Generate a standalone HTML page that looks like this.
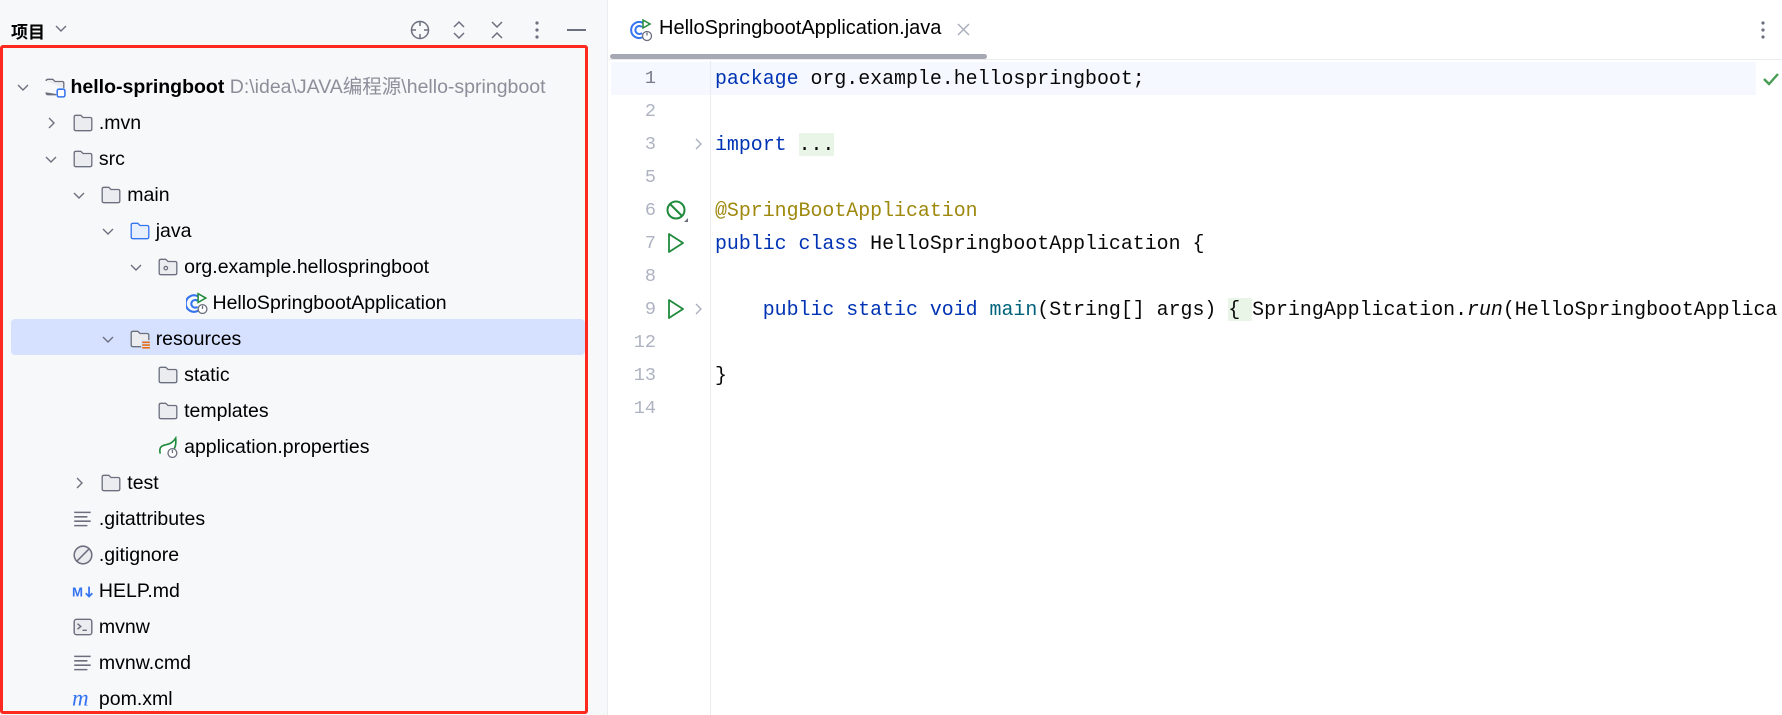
<!DOCTYPE html>
<html><head><meta charset="utf-8"><style>
*{margin:0;padding:0;box-sizing:border-box}
html,body{width:1782px;height:715px;overflow:hidden}
body{background:#fff;font-family:"Liberation Sans","Noto Sans CJK SC",sans-serif;position:relative;color:#000}
#left{position:absolute;left:0;top:0;width:608px;height:715px;background:#f7f8fa;border-right:1px solid #ebecf0;overflow:hidden}
.a{position:absolute}
.row{position:absolute;height:36px;line-height:36px;font-size:19.5px;white-space:nowrap}
.chev{position:absolute;width:14px;height:14px}
.ic{position:absolute;width:22px;height:22px}
#clip{position:absolute;left:0;top:0;width:1782px;height:715px;overflow:hidden}
.code{position:absolute;left:715px;font-family:"Liberation Mono",monospace;font-size:19.9px;line-height:33px;white-space:pre;color:#080808}
.ln{position:absolute;width:60px;left:596px;text-align:right;font-family:"Liberation Mono",monospace;font-size:18.5px;line-height:33px;color:#aeb3c2}
.kw{color:#0033b3}
</style></head><body>
<div id="left">
 <div class="a" style="left:11px;top:18px;font-size:17px;font-weight:bold;color:#000">项目</div>
 <svg class="a" style="left:55px;top:24px" width="12" height="10"><path d="M1 2 L6 7 L11 2" stroke="#6c707e" stroke-width="1.4" fill="none"/></svg>
 <svg class="a" style="left:409px;top:19px" width="22" height="22"><circle cx="11" cy="11" r="8.5" stroke="#6c707e" stroke-width="1.5" fill="none"/><path d="M11 2v5M11 15v5M2 11h5M15 11h5" stroke="#6c707e" stroke-width="1.5"/></svg>
 <svg class="a" style="left:451px;top:19px" width="16" height="22"><path d="M3 8 L8 3 L13 8 M3 14 L8 19 L13 14" stroke="#6c707e" stroke-width="1.5" fill="none"/></svg>
 <svg class="a" style="left:489px;top:19px" width="16" height="22"><path d="M3 3 L8 8 L13 3 M3 19 L8 14 L13 19" stroke="#6c707e" stroke-width="1.5" fill="none"/></svg>
 <svg class="a" style="left:533px;top:19px" width="8" height="22"><circle cx="4" cy="4" r="1.6" fill="#6c707e"/><circle cx="4" cy="11" r="1.6" fill="#6c707e"/><circle cx="4" cy="18" r="1.6" fill="#6c707e"/></svg>
 <div class="a" style="left:567px;top:29px;width:19px;height:1.6px;background:#6c707e"></div>

 <div class="a" style="left:11px;top:319px;width:574px;height:36px;background:#d5e1ff;border-radius:4px"></div>
 <div id="tree"></div>
 <div class="a" style="left:0;top:45px;width:588px;height:669px;border:3px solid #ff2a1f;border-radius:3px"></div>
</div>

<div id="clip">
<div class="a" style="left:609px;top:0;width:1173px;height:60px;border-bottom:1px solid #ebecf0;background:#fff"></div>
<svg class="a" style="left:629px;top:18px" width="24" height="24"><path d="M14 5 A8 8 0 1 0 14 19" stroke="#3574f0" stroke-width="2" fill="none"/><path d="M13 9 A4 4 0 1 0 13 15" stroke="#3574f0" stroke-width="2" fill="none"/><path d="M14 2 L21 6 L14 10 Z" stroke="#208a3c" stroke-width="1.5" fill="#fff"/><circle cx="18" cy="18" r="4.5" fill="#fff" stroke="#6c707e" stroke-width="1.3"/><path d="M18 14.5v3" stroke="#6c707e" stroke-width="1.3"/></svg>
<div class="a" style="left:659px;top:17px;font-size:20px;color:#000">HelloSpringbootApplication.java</div>
<svg class="a" style="left:957px;top:23px" width="13" height="13"><path d="M1 1L12 12M12 1L1 12" stroke="#a8adbd" stroke-width="1.4"/></svg>
<svg class="a" style="left:1759px;top:19px" width="8" height="22"><circle cx="4" cy="4" r="1.6" fill="#6c707e"/><circle cx="4" cy="11" r="1.6" fill="#6c707e"/><circle cx="4" cy="18" r="1.6" fill="#6c707e"/></svg>
<div class="a" style="left:610px;top:54px;width:377px;height:5px;background:#a6a9b3;border-radius:3px"></div>

<div class="a" style="left:611px;top:62px;width:1145px;height:33px;background:#f5f8fe"></div>
<div class="a" style="left:710px;top:61px;width:1px;height:654px;background:#ebecf0"></div>
<svg class="a" style="left:1762px;top:71px" width="18" height="16"><path d="M2 8 L7 13 L16 3" stroke="#499c54" stroke-width="2.4" fill="none"/></svg>

<div class="ln" style="top:62px;color:#767a8a">1</div>
<div class="ln" style="top:95px">2</div>
<div class="ln" style="top:128px">3</div>
<div class="ln" style="top:161px">5</div>
<div class="ln" style="top:194px">6</div>
<div class="ln" style="top:227px">7</div>
<div class="ln" style="top:260px">8</div>
<div class="ln" style="top:293px">9</div>
<div class="ln" style="top:326px">12</div>
<div class="ln" style="top:359px">13</div>
<div class="ln" style="top:392px">14</div>

<svg class="a" style="left:694px;top:137px" width="10" height="14"><path d="M2 2 L7 7 L2 12" stroke="#a8adbd" stroke-width="1.3" fill="none"/></svg>
<svg class="a" style="left:694px;top:302px" width="10" height="14"><path d="M2 2 L7 7 L2 12" stroke="#a8adbd" stroke-width="1.3" fill="none"/></svg>
<svg class="a" style="left:665px;top:199px" width="24" height="24"><circle cx="11" cy="11" r="8.5" stroke="#208a3c" stroke-width="2" fill="none"/><path d="M5 5 L17 17" stroke="#208a3c" stroke-width="2"/><path d="M19 23 L23 19 L23 23Z" fill="#6c707e"/></svg>
<svg class="a" style="left:666px;top:232px" width="20" height="22"><path d="M3 2 L17 11 L3 20 Z" stroke="#208a3c" stroke-width="1.8" fill="none" stroke-linejoin="round"/></svg>
<svg class="a" style="left:666px;top:298px" width="20" height="22"><path d="M3 2 L17 11 L3 20 Z" stroke="#208a3c" stroke-width="1.8" fill="none" stroke-linejoin="round"/></svg>

<div class="code" style="top:62px"><span class="kw">package</span> org.example.hellospringboot;</div>
<div class="code" style="top:128px"><span class="kw">import</span> <span style="background:#e9f5e6">...</span></div>
<div class="code" style="top:194px;color:#9e880d">@SpringBootApplication</div>
<div class="code" style="top:227px"><span class="kw">public class</span> HelloSpringbootApplication {</div>
<div class="code" style="top:293px">    <span class="kw">public static void</span> <span style="color:#00627a">main</span>(String[] args) <span style="background:#e9f5e6">{ </span>SpringApplication.<i>run</i>(HelloSpringbootApplica</div>
<div class="code" style="top:359px">}</div>
</div>

<script>
const F='<path d="M2 4.5 Q2 3 3.5 3 H8 L10 5 H16.5 Q18 5 18 6.5 V15.5 Q18 17 16.5 17 H3.5 Q2 17 2 15.5 Z" ';
const icons={
 folder:F+'fill="#ebecf0" stroke="#6c707e" stroke-width="1.2"/>',
 jfolder:F+'fill="#e7effd" stroke="#3574f0" stroke-width="1.2"/>',
 pkg:F+'fill="#ebecf0" stroke="#6c707e" stroke-width="1.2"/><circle cx="8" cy="11" r="1.6" fill="none" stroke="#6c707e" stroke-width="1.1"/>',
 res:F+'fill="#ebecf0" stroke="#6c707e" stroke-width="1.2"/><rect x="11" y="11" width="9" height="9" fill="#d5e1ff"/><path d="M12 13h7M12 15.5h7M12 18h7" stroke="#e66d17" stroke-width="1.4"/>',
 proj:'<path d="M2 4.5 Q2 3 3.5 3 H8 L10 5 H16.5 Q18 5 18 6.5 V11 M11 17 H3.5 Q2 17 2 15.5 Z" fill="#ebecf0" stroke="#6c707e" stroke-width="1.2"/><rect x="12" y="12" width="7" height="7" rx="1.5" fill="#fff" stroke="#3574f0" stroke-width="1.4"/>',
 app:'<path d="M11 4 A7.5 7.5 0 1 0 11 17" stroke="#3574f0" stroke-width="1.9" fill="none"/><path d="M10.5 8 A3.5 3.5 0 1 0 10.5 13.5" stroke="#3574f0" stroke-width="1.9" fill="none"/><path d="M11 1.5 L18 5.5 L11 9.5 Z" stroke="#208a3c" stroke-width="1.4" fill="#fff"/><circle cx="15" cy="15.5" r="4" fill="#fff" stroke="#6c707e" stroke-width="1.2"/><path d="M15 12.5v3" stroke="#6c707e" stroke-width="1.2"/>',
 props:'<path d="M3 16 Q1 9 8 8 Q14 7 17 2 Q18 12 12 15" stroke="#208a3c" stroke-width="1.5" fill="#fff"/><circle cx="14" cy="15.5" r="4" fill="#fff" stroke="#6c707e" stroke-width="1.2"/><path d="M14 12.5v3" stroke="#6c707e" stroke-width="1.2"/>',
 lines:'<path d="M2 4h15M2 8h12M2 12h15M2 16h12" stroke="#6c707e" stroke-width="1.4"/>',
 ignore:'<circle cx="10" cy="10" r="8" fill="#ebecf0" stroke="#6c707e" stroke-width="1.4"/><path d="M4.5 15.5 L15.5 4.5" stroke="#6c707e" stroke-width="1.4"/>',
 md:'<text x="0" y="15" font-family="Liberation Sans" font-weight="bold" font-size="12" fill="#3574f0">M</text><path d="M15.5 6v9M12.5 12l3 3 3-3" stroke="#3574f0" stroke-width="1.6" fill="none"/>',
 term:'<rect x="2" y="3" width="16" height="14" rx="2" fill="#ebecf0" stroke="#6c707e" stroke-width="1.3"/><path d="M5 7 L8 9.5 L5 12M9.5 13h4" stroke="#6c707e" stroke-width="1.3" fill="none"/>',
 m:'<text x="0" y="16" font-family="Liberation Serif" font-style="italic" font-size="21" fill="#3574f0">m</text>'
};
const rows=[[0,'d','proj','<b>hello-springboot</b> <span style="color:#8c8f9a">D:\\idea\\JAVA编程源\\hello-springboot</span>'],
[1,'r','folder','.mvn'],[1,'d','folder','src'],[2,'d','folder','main'],[3,'d','jfolder','java'],
[4,'d','pkg','org.example.hellospringboot'],[5,'','app','HelloSpringbootApplication'],[3,'d','res','resources'],
[4,'','folder','static'],[4,'','folder','templates'],[4,'','props','application.properties'],[2,'r','folder','test'],
[1,'','lines','.gitattributes'],[1,'','ignore','.gitignore'],[1,'','md','HELP.md'],[1,'','term','mvnw'],[1,'','lines','mvnw.cmd'],[1,'','m','pom.xml']];
let h='';
rows.forEach((r,i)=>{
 const cy=86.5+36*i, tx=70.5+28.4*r[0];
 if(r[1]){const p=r[1]=='d'?'M2 5 L7 10 L12 5':'M5 2 L10 7 L5 12';
  h+=`<svg class="chev" style="left:${tx-55}px;top:${cy-7}px" width="14" height="14"><path d="${p}" stroke="#6c707e" stroke-width="1.4" fill="none"/></svg>`;}
 h+=`<svg class="ic" style="left:${tx-27}px;top:${cy-11}px" viewBox="0 0 20 20">${icons[r[2]]}</svg>`;
 h+=`<div class="row" style="left:${tx}px;top:${cy-18}px">${r[3]}</div>`;
});
document.getElementById('tree').innerHTML=h;
</script>
</body></html>
